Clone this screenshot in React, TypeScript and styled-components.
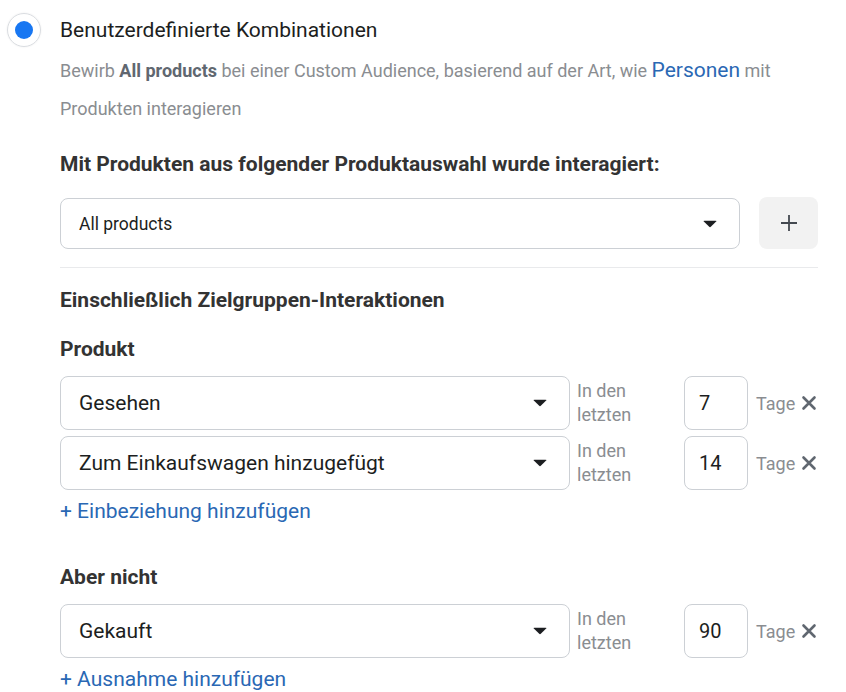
import styled, { createGlobalStyle } from 'styled-components';

const GlobalStyle = createGlobalStyle`
  body {
    margin: 0;
    background: #fff;
    font-family: Roboto, "Liberation Sans", Arial, sans-serif;
    color: #1c1e21;
  }
`;

const Page = styled.div`
  width: 846px;
  height: 692px;
  overflow: hidden;
`;

const Header = styled.label`
  display: flex;
  align-items: center;
  gap: 19px;
  padding: 13px 0 0 7px;
  height: 34px;
`;

const Radio = styled.span`
  box-sizing: border-box;
  width: 34px;
  height: 34px;
  border-radius: 50%;
  border: 1px solid #dadde1;
  box-shadow: 0 0 2px rgba(0, 0, 0, 0.08);
  display: flex;
  align-items: center;
  justify-content: center;

  &::after {
    content: '';
    width: 18px;
    height: 18px;
    border-radius: 50%;
    background: #1877f2;
  }
`;

const Title = styled.span`
  font-size: 21px;
  line-height: 24px;
  color: #1c1e21;
`;

const Body = styled.div`
  margin-left: 60px;
  width: 758px;
`;

const Description = styled.div`
  margin-top: 4px;
  font-size: 18px;
  color: #8a8d91;
`;

const DescLine = styled.p`
  margin: 0;
  line-height: 38px;
  white-space: nowrap;

  strong {
    color: #606770;
    font-weight: 700;
  }
`;

const InlineLink = styled.span`
  color: #2a68b4;
  font-size: 21px;
`;

const Heading = styled.h3<{ $top: number }>`
  margin: ${(p) => p.$top}px 0 0;
  font-size: 21px;
  line-height: 24px;
  font-weight: 700;
  color: #333;
`;

const SelectRow = styled.div`
  display: flex;
  gap: 19px;
  margin-top: 22px;
`;

const Select = styled.div<{ $size: number; $height: number }>`
  box-sizing: border-box;
  flex: 1;
  height: ${(p) => p.$height}px;
  border: 1px solid #ccd0d5;
  border-radius: 8px;
  display: flex;
  align-items: center;
  justify-content: space-between;
  padding: 0 21px 0 18px;
  font-size: ${(p) => p.$size}px;
  color: #1c1e21;
  background: #fff;
`;

const Caret = styled.span`
  width: 0;
  height: 0;
  border-left: 8px solid transparent;
  border-right: 8px solid transparent;
  border-top: 8px solid #1c1e21;
  border-radius: 2px;
  transform: scale(0.9);
`;

const AddButton = styled.button`
  width: 59px;
  height: 52px;
  margin-top: -1px;
  border: none;
  border-radius: 8px;
  background: #f2f2f2;
  display: flex;
  align-items: center;
  justify-content: center;
  padding: 0;
`;

const Divider = styled.hr`
  margin: 18px 0 0;
  border: none;
  border-top: 1px solid #e9eaec;
`;

const Rows = styled.div`
  display: flex;
  flex-direction: column;
  gap: 6px;
  margin-top: 15px;
`;

const Row = styled.div`
  display: grid;
  grid-template-columns: 510px 114px 64px auto;
  align-items: center;
  height: 54px;
`;

const RangeLabel = styled.span`
  padding-left: 7px;
  font-size: 18px;
  line-height: 24px;
  color: #8a8d91;
`;

const NumberBox = styled.div`
  box-sizing: border-box;
  height: 54px;
  border: 1px solid #ccd0d5;
  border-radius: 8px;
  display: flex;
  align-items: center;
  padding-left: 14px;
  font-size: 20px;
  color: #1c1e21;
`;

const Unit = styled.span`
  display: flex;
  align-items: center;
  gap: 6px;
  padding-left: 8px;
  font-size: 18px;
  color: #8a8d91;
`;

const AddLink = styled.a`
  display: block;
  margin-top: 9px;
  font-size: 21px;
  line-height: 24px;
  color: #2a68b4;
  text-decoration: none;
`;

const RemoveIcon = () => (
  <svg width="16" height="16" viewBox="0 0 16 16">
    <path d="M2.5 2.5l11 11M13.5 2.5l-11 11" stroke="#606770" strokeWidth="2.6" strokeLinecap="round" />
  </svg>
);

const PlusIcon = () => (
  <svg width="18" height="18" viewBox="0 0 18 18">
    <path d="M9 1v16M1 9h16" stroke="#444950" strokeWidth="1.8" />
  </svg>
);

interface Interaction {
  action: string;
  days: number;
}

const included: Interaction[] = [
  { action: 'Gesehen', days: 7 },
  { action: 'Zum Einkaufswagen hinzugefügt', days: 14 },
];

const excluded: Interaction[] = [{ action: 'Gekauft', days: 90 }];

const InteractionRows = ({ items }: { items: Interaction[] }) => (
  <Rows>
    {items.map((item) => (
      <Row key={item.action}>
        <Select $size={21} $height={54}>
          {item.action}
          <Caret />
        </Select>
        <RangeLabel>
          In den
          <br />
          letzten
        </RangeLabel>
        <NumberBox>{item.days}</NumberBox>
        <Unit>
          Tage
          <RemoveIcon />
        </Unit>
      </Row>
    ))}
  </Rows>
);

export default function App() {
  return (
    <Page>
      <GlobalStyle />
      <Header>
        <Radio />
        <Title>Benutzerdefinierte Kombinationen</Title>
      </Header>
      <Body>
        <Description>
          <DescLine>
            Bewirb <strong>All products</strong> bei einer Custom Audience, basierend auf der Art, wie{' '}
            <InlineLink>Personen</InlineLink> mit
          </DescLine>
          <DescLine>Produkten interagieren</DescLine>
        </Description>
        <Heading $top={24}>Mit Produkten aus folgender Produktauswahl wurde interagiert:</Heading>
        <SelectRow>
          <Select $size={17.5} $height={51}>
            All products
            <Caret />
          </Select>
          <AddButton>
            <PlusIcon />
          </AddButton>
        </SelectRow>
        <Divider />
        <Heading $top={20}>Einschließlich Zielgruppen-Interaktionen</Heading>
        <Heading $top={25}>Produkt</Heading>
        <InteractionRows items={included} />
        <AddLink href="#">+ Einbeziehung hinzufügen</AddLink>
        <Heading $top={42}>Aber nicht</Heading>
        <InteractionRows items={excluded} />
        <AddLink href="#">+ Ausnahme hinzufügen</AddLink>
      </Body>
    </Page>
  );
}
